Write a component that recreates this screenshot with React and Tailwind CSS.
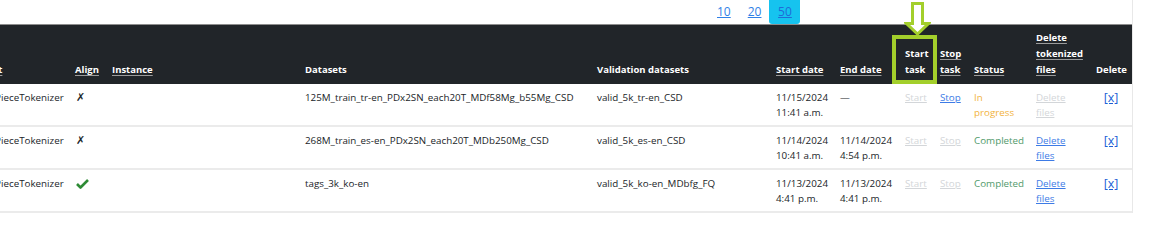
import React from 'react'

const cols = [122, 37, 193, 292, 179, 64, 65, 35, 34, 62, 60, 42]

const rows = [
  {
    tokenizer: 'SentencePieceTokenizer',
    align: false,
    dataset: '125M_train_tr-en_PDx2SN_each20T_MDf58Mg_b55Mg_CSD',
    valid: 'valid_5k_tr-en_CSD',
    start: ['11/15/2024', '11:41 a.m.'],
    end: null,
    running: true,
  },
  {
    tokenizer: 'SentencePieceTokenizer',
    align: false,
    dataset: '268M_train_es-en_PDx2SN_each20T_MDb250Mg_CSD',
    valid: 'valid_5k_es-en_CSD',
    start: ['11/14/2024', '10:41 a.m.'],
    end: ['11/14/2024', '4:54 p.m.'],
    running: false,
  },
  {
    tokenizer: 'SentencePieceTokenizer',
    align: true,
    dataset: 'tags_3k_ko-en',
    valid: 'valid_5k_ko-en_MDbfg_FQ',
    start: ['11/13/2024', '4:41 p.m.'],
    end: ['11/13/2024', '4:41 p.m.'],
    running: false,
  },
]

const th = 'px-[6px] pt-[5px] pb-[6px] align-bottom text-left font-bold text-[9.5px]'
const hl = 'underline decoration-[#9b9b9b] underline-offset-2'
const td = 'px-[6px] pt-[6px] pb-[5px] align-top'

function Lines({ items }) {
  return items.map((t) => (
    <span key={t} className="block">
      {t}
    </span>
  ))
}

export default function App() {
  return (
    <div className="bg-white w-[1158px] h-[239px] overflow-hidden" style={{ fontFamily: '"Open Sans", "Noto Sans", sans-serif' }}>
      <div className="relative w-[1133px] border-r border-[#e8e8e8] overflow-hidden">
        {/* page size picker */}
        <div className="flex items-start h-[24px] pl-[717px] text-[12px] text-[#2f7fe6]">
          <a className="underline pt-[3px]">10</a>
          <a className="underline pt-[3px] ml-[17px]">20</a>
          <span className="ml-[8px] w-[31px] h-[24px] bg-[#16c3ef] rounded-b-[3px] flex justify-center pt-[3px]">
            <a className="underline text-[#1f6bd8]">50</a>
          </span>
        </div>

        <table className="table-fixed border-collapse ml-[-53px] text-[9.8px] leading-[15px] text-[#212529]" style={{ width: 1185 }}>
          <colgroup>
            {cols.map((w, i) => (
              <col key={i} style={{ width: w }} />
            ))}
          </colgroup>
          <thead>
            <tr className="bg-[#212529] text-white leading-[16px] border-t border-[#8d8d8d]">
              <th className={th}><span className={hl}>Document</span></th>
              <th className={th}><span className={hl}>Align</span></th>
              <th className={th}><span className={hl}>Instance</span></th>
              <th className={th}>Datasets</th>
              <th className={th}>Validation datasets</th>
              <th className={th}><span className={hl}>Start date</span></th>
              <th className={th}><span className={hl}>End date</span></th>
              <th className={th}><Lines items={['Start', 'task']} /></th>
              <th className={th}>
                <span className={`block ${hl}`}>Stop</span>
                <span className={`block ${hl}`}>task</span>
              </th>
              <th className={th}><span className={hl}>Status</span></th>
              <th className={th}>
                <span className={`block ${hl}`}>Delete</span>
                <span className={`block ${hl}`}>tokenized</span>
                <span className={`block ${hl}`}>files</span>
              </th>
              <th className={`${th} text-center`}>Delete</th>
            </tr>
          </thead>
          <tbody>
            {rows.map((r, i) => (
              <tr key={i} className="border-b-2 border-[#ebebeb]">
                <td className={td}>{r.tokenizer}</td>
                <td className={td}>
                  {r.align ? (
                    <svg width="13" height="11" viewBox="0 0 13 11" className="mt-[2px] ml-[1px]">
                      <path d="M1 6 L4.5 9.5 L12 2" fill="none" stroke="#2e8b35" strokeWidth="2.6" strokeLinejoin="round" />
                    </svg>
                  ) : (
                    <span className="ml-[1px] text-[11px]" style={{ fontFamily: '"DejaVu Sans", sans-serif' }}>✗</span>
                  )}
                </td>
                <td className={td}></td>
                <td className={td}>{r.dataset}</td>
                <td className={td}>{r.valid}</td>
                <td className={td}><Lines items={r.start} /></td>
                <td className={td}>{r.end ? <Lines items={r.end} /> : '—'}</td>
                <td className={td}><span className="underline text-[#d3d6d9]">Start</span></td>
                <td className={td}>
                  <span className={r.running ? 'underline text-[#3d7be6]' : 'underline text-[#d3d6d9]'}>Stop</span>
                </td>
                <td className={td}>
                  {r.running ? (
                    <span className="text-[#f2b33d]"><Lines items={['In', 'progress']} /></span>
                  ) : (
                    <span className="text-[#519a6b]">Completed</span>
                  )}
                </td>
                <td className={td}>
                  <span className={r.running ? 'text-[#d3d6d9]' : 'text-[#3d7be6]'}>
                    <span className="block underline">Delete</span>
                    <span className="block underline">files</span>
                  </span>
                </td>
                <td className={`${td} text-center`}>
                  <a className="underline text-[12.5px] font-medium text-[#1b5fd6]">[x]</a>
                </td>
              </tr>
            ))}
          </tbody>
        </table>

        {/* highlight annotation */}
        <svg className="absolute left-[904px] top-[2px]" width="27" height="34" viewBox="0 0 27 34">
          <path d="M8.5 1.5 H18.5 V21.5 H24.5 L13.5 32 L2.5 21.5 H8.5 Z" fill="white" stroke="#a3cf2b" strokeWidth="3" strokeLinejoin="miter" />
        </svg>
        <div className="absolute left-[892px] top-[35px] w-[45px] h-[49px] border-[4px] border-[#a3cf2b]"></div>
      </div>
    </div>
  )
}
